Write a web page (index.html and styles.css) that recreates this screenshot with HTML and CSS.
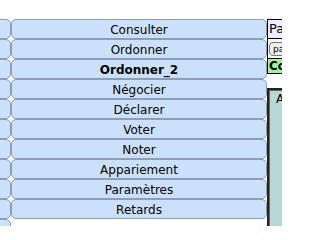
FILE: index.html
```html
<!DOCTYPE html>
<html>
<head>
<meta charset="utf-8">
<link rel="stylesheet" href="styles.css">
</head>
<body>
<div class="page">
  <div class="side">
    <div class="sbtn"></div><div class="sbtn"></div><div class="sbtn"></div><div class="sbtn"></div>
    <div class="sbtn"></div><div class="sbtn"></div><div class="sbtn"></div><div class="sbtn"></div>
    <div class="sbtn"></div><div class="sbtn"></div><div class="sbtn"></div>
  </div>
  <div class="menu">
    <div class="btn">Consulter</div>
    <div class="btn">Ordonner</div>
    <div class="btn bold">Ordonner_2</div>
    <div class="btn">Négocier</div>
    <div class="btn">Déclarer</div>
    <div class="btn">Voter</div>
    <div class="btn">Noter</div>
    <div class="btn">Appariement</div>
    <div class="btn">Paramètres</div>
    <div class="btn">Retards</div>
  </div>
  <div class="panel">
    <div class="title">Pa</div>
    <div class="toolrow"><span class="small">pa</span></div>
    <div class="green">Co</div>
    <div class="box"><div class="boxtext">A</div></div>
  </div>
</div>
</body>
</html>
```
FILE: styles.css
```css
html, body {
  margin: 0;
  padding: 0;
  background: #ffffff;
  overflow: hidden;
}
.page {
  display: flex;
  width: 282px;
  padding-top: 19px;
  height: 226px;
  box-sizing: border-box;
  overflow: hidden;
  font-family: "DejaVu Sans", sans-serif;
  font-size: 12px;
  color: #000;
}
.side {
  width: 11px;
  flex: none;
  overflow: hidden;
  display: flex;
  flex-direction: column;
}
.sbtn {
  width: 60px;
  height: 20px;
  flex: none;
  margin-left: -49px;
  box-sizing: border-box;
  border: 1px solid #8e9db6;
  border-radius: 5px;
  background: #cbe0fb;
}
.menu {
  width: 256px;
  flex: none;
  display: flex;
  flex-direction: column;
}
.btn {
  height: 20px;
  box-sizing: border-box;
  border: 1px solid #8e9db6;
  border-radius: 5px;
  background: #cbe0fb;
  text-align: center;
  padding-top: 2px;
  line-height: 16px;
}
.bold { font-weight: bold; }
.panel {
  flex: 1;
  min-width: 0;
  display: flex;
  flex-direction: column;
  overflow: hidden;
}
.title {
  height: 20px;
  box-sizing: border-box;
  border: 1px solid #000;
  border-right: none;
  background: #eeeeff;
  font-size: 13px;
  line-height: 18px;
  padding-left: 1px;
  white-space: nowrap;
}
.toolrow {
  height: 19px;
  box-sizing: border-box;
  border-left: 1px solid #000;
  padding: 2px 0 0 1px;
  background: #f6f6ff;
  white-space: nowrap;
}
.small {
  display: inline-block;
  border: 1px solid #777;
  border-radius: 4px;
  background: #eeeeee;
  font-size: 9px;
  line-height: 12px;
  padding: 0 3px;
}
.green {
  height: 16px;
  box-sizing: border-box;
  border: 1px solid #000;
  border-right: none;
  background: #a6f0a0;
  font-weight: bold;
  line-height: 14px;
  padding-left: 1px;
  white-space: nowrap;
}
.box {
  margin-top: 14px;
  flex: 1;
  border: 2px solid #222;
  border-right: none;
  border-bottom: none;
  background: #b8d8d8;
  box-shadow: inset 1px 1px 0 #666;
}
.boxtext {
  padding: 2px 0 0 7px;
  white-space: nowrap;
}
```
